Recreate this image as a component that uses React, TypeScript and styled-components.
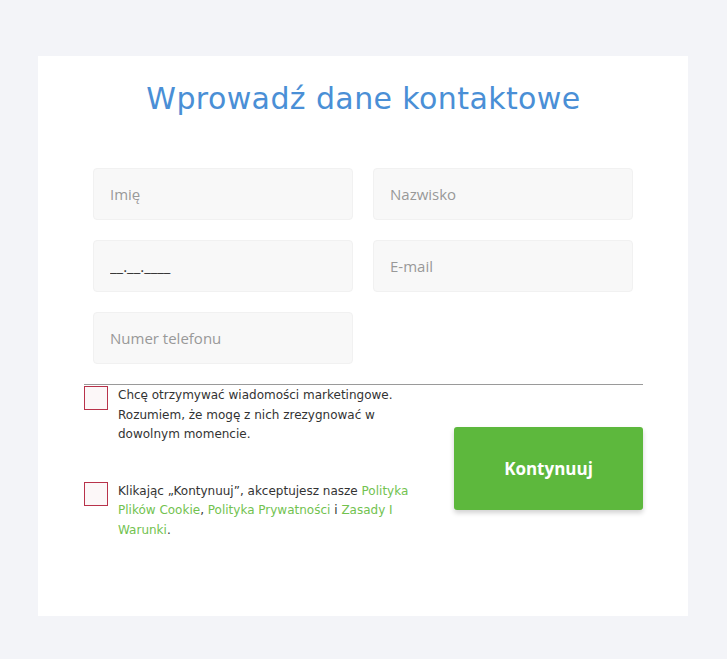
import React from 'react'
import styled, { createGlobalStyle } from 'styled-components'

const GlobalStyle = createGlobalStyle`
  html, body {
    margin: 0;
    padding: 0;
    background-color: #f3f4f8;
  }
  * {
    box-sizing: border-box;
  }
`

const Page = styled.div`
  width: 727px;
  min-height: 659px;
  padding: 56px 39px 43px 38px;
`

const Card = styled.div`
  background-color: #ffffff;
  width: 650px;
  height: 560px;
  padding: 25px 45px 0 46px;
`

const Title = styled.h1`
  margin: 0 0 51px;
  text-align: center;
  font-family: 'DejaVu Sans', sans-serif;
  font-weight: 400;
  font-size: 30px;
  line-height: 36px;
  color: #4a8fd6;
  letter-spacing: 0.4px;
`

const Fields = styled.div`
  padding: 0 10px 20px 9px;
  border-bottom: 1px solid #9a9a9a;
`

const FieldGrid = styled.div`
  display: grid;
  grid-template-columns: 260px 260px;
  column-gap: 20px;
  row-gap: 20px;
`

const Field = styled.input<{ $filled?: boolean }>`
  height: 52px;
  width: 100%;
  padding: 0 16px;
  border: 1px solid #f1f1f1;
  border-radius: 4px;
  background-color: #f8f8f8;
  font-family: 'Open Sans', sans-serif;
  font-size: 15px;
  color: ${({ $filled }) => ($filled ? '#333333' : '#999999')};
  outline: none;

  &::placeholder {
    color: #999999;
  }
`

const BottomRow = styled.div`
  display: flex;
  justify-content: space-between;
  align-items: flex-start;
  padding-top: 1px;
`

const Consents = styled.div`
  display: flex;
  flex-direction: column;
  gap: 37px;
  width: 330px;
`

const Consent = styled.label`
  display: flex;
  align-items: flex-start;
  gap: 10px;
`

const Box = styled.span`
  flex: 0 0 24px;
  width: 24px;
  height: 24px;
  border: 1px solid #b8324a;
  background-color: #fcf7f8;
`

const ConsentText = styled.p`
  margin: 0;
  width: 296px;
  font-family: 'DejaVu Sans', sans-serif;
  font-size: 12px;
  line-height: 19.5px;
  color: #333333;
`

const Link = styled.a`
  color: #72c24f;
  text-decoration: none;
`

const SubmitButton = styled.button`
  margin-top: 41px;
  width: 189px;
  height: 83px;
  border: none;
  border-radius: 3px;
  background-color: #5db83d;
  box-shadow: 0 3px 5px rgba(0, 0, 0, 0.18);
  font-family: 'Open Sans', sans-serif;
  font-weight: 700;
  font-size: 17px;
  color: #ffffff;
  cursor: pointer;
`

const App: React.FC = () => {
  return (
    <Page>
      <GlobalStyle />
      <Card>
        <Title>Wprowadź dane kontaktowe</Title>
        <Fields>
          <FieldGrid>
            <Field placeholder="Imię" />
            <Field placeholder="Nazwisko" />
            <Field $filled defaultValue="__.__.____" />
            <Field placeholder="E-mail" />
            <Field placeholder="Numer telefonu" />
          </FieldGrid>
        </Fields>
        <BottomRow>
          <Consents>
            <Consent>
              <Box />
              <ConsentText>
                Chcę otrzymywać wiadomości marketingowe. Rozumiem, że mogę z nich
                zrezygnować w dowolnym momencie.
              </ConsentText>
            </Consent>
            <Consent>
              <Box />
              <ConsentText>
                Klikając „Kontynuuj”, akceptujesz nasze{' '}
                <Link href="#">Polityka Plików Cookie</Link>,{' '}
                <Link href="#">Polityka Prywatności</Link> i{' '}
                <Link href="#">Zasady I Warunki</Link>.
              </ConsentText>
            </Consent>
          </Consents>
          <SubmitButton>Kontynuuj</SubmitButton>
        </BottomRow>
      </Card>
    </Page>
  )
}

export default App
